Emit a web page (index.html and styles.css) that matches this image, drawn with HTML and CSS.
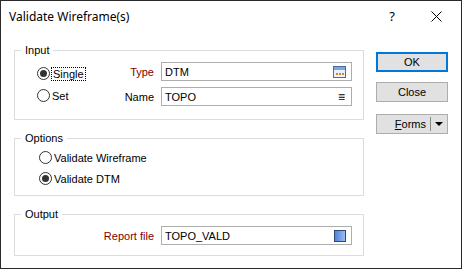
FILE: index.html
```html
<!DOCTYPE html>
<html lang="en">
<head>
  <meta charset="UTF-8">
  <title>Validate Wireframe(s)</title>
  <link rel="stylesheet" href="styles.css">
</head>
<body>

  <div class="window">
    <div class="titlebar">
      <span class="title">Validate Wireframe(s)</span>
      <span class="help">?</span>
      <svg class="close-x" width="11" height="11" viewBox="0 0 11 11">
        <path d="M0.5 0.5 L10.5 10.5 M10.5 0.5 L0.5 10.5" stroke="#000" stroke-width="1"/>
      </svg>
    </div>

    <div class="content">
      <div class="groups">

        <fieldset class="group group-input">
          <legend>Input</legend>
          <div class="radios">
            <label class="radio"><span class="dot checked"></span><span class="focus">Single</span></label>
            <label class="radio"><span class="dot"></span><span>Set</span></label>
          </div>
          <div class="fields">
            <div class="row">
              <span class="lbl red">Type</span>
              <div class="box">
                <span>DTM</span>
                <svg class="ico" width="13" height="12" viewBox="0 0 13 12">
                  <rect x="0.5" y="0.5" width="12" height="11" fill="#eaf1fb" stroke="#4a6d9c"/>
                  <rect x="1" y="1" width="11" height="3" fill="#7fa6dc"/>
                  <rect x="3" y="7" width="2" height="2" fill="#c98a2b"/>
                  <rect x="6" y="7" width="2" height="2" fill="#c98a2b"/>
                  <rect x="9" y="7" width="2" height="2" fill="#c98a2b"/>
                </svg>
              </div>
            </div>
            <div class="row">
              <span class="lbl">Name</span>
              <div class="box">
                <span>TOPO</span>
                <span class="list">&#8801;</span>
              </div>
            </div>
          </div>
        </fieldset>

        <fieldset class="group group-options">
          <legend>Options</legend>
          <div class="radios">
            <label class="radio"><span class="dot"></span><span>Validate Wireframe</span></label>
            <label class="radio"><span class="dot checked"></span><span>Validate DTM</span></label>
          </div>
        </fieldset>

        <fieldset class="group group-output">
          <legend>Output</legend>
          <div class="row">
            <span class="lbl red">Report file</span>
            <div class="box">
              <span>TOPO_VALD</span>
              <svg class="ico" width="12" height="12" viewBox="0 0 12 12">
                <defs>
                  <linearGradient id="blu" x1="0" y1="0" x2="1" y2="0">
                    <stop offset="0" stop-color="#4f7fd6"/>
                    <stop offset="1" stop-color="#9cc0f5"/>
                  </linearGradient>
                </defs>
                <rect x="0.5" y="0.5" width="11" height="11" fill="url(#blu)" stroke="#2c4a7c"/>
              </svg>
            </div>
          </div>
        </fieldset>

      </div>

      <div class="buttons">
        <button class="btn default">OK</button>
        <button class="btn">Close</button>
        <button class="btn split">
          <span class="split-main"><u>F</u>orms</span>
          <span class="split-arrow"></span>
        </button>
      </div>
    </div>
  </div>

</body>
</html>
```

FILE: styles.css
```css
* {
  box-sizing: border-box;
}
body {
  margin: 0;
  background: #fff;
  font-family: "Liberation Sans", Arial, sans-serif;
  font-size: 11px;
  color: #000;
}
.window {
  width: 462px;
  height: 269px;
  border: 1px solid #2b2b2b;
  background: #fff;
}
.titlebar {
  height: 30px;
  display: flex;
  align-items: center;
  padding-left: 8px;
}
.title {
  font-family: "Noto Sans", sans-serif;
  font-size: 12px;
  flex: 1;
}
.help {
  font-family: "Noto Sans", sans-serif;
  font-size: 13px;
  margin-right: 36px;
}
.close-x {
  margin-right: 19px;
}

.content {
  display: flex;
  padding: 13px 0 0 13px;
}
.groups {
  width: 350px;
}
.group {
  margin: 0 0 12px 0;
  padding: 0;
  border: 1px solid #dcdcdc;
}
.group legend {
  margin-left: 6px;
  padding: 0 4px;
}
.group-input {
  display: flex;
  height: 76px;
  padding: 6px 11px 0 0;
}
.radios {
  display: flex;
  flex-direction: column;
  gap: 9px;
  padding-top: 5px;
  margin-left: 22px;
}
.radio {
  display: flex;
  align-items: center;
  height: 13px;
}
.dot {
  width: 13px;
  height: 13px;
  border: 1px solid #333;
  border-radius: 50%;
  margin-right: 2px;
  position: relative;
  background: #fff;
}
.dot.checked::after {
  content: "";
  position: absolute;
  left: 2px;
  top: 2px;
  width: 7px;
  height: 7px;
  border-radius: 50%;
  background: #333;
}
.focus {
  outline: 1px dotted #000;
  padding: 0 1px;
}
.fields {
  flex: 1;
  display: flex;
  flex-direction: column;
  gap: 6px;
}
.row {
  display: flex;
  align-items: center;
  justify-content: flex-end;
}
.lbl {
  margin-right: 7px;
}
.red {
  color: #800000;
}
.box {
  width: 191px;
  height: 19px;
  border: 1px solid #adadad;
  display: flex;
  align-items: center;
  justify-content: space-between;
  padding: 0 5px 0 3px;
}
.list {
  font-size: 12px;
  margin-right: 1px;
}

.group-options {
  height: 64px;
  padding: 2px 0 0 0;
}
.group-options .radios {
  margin-left: 24px;
  gap: 8px;
}
.group-output {
  height: 48px;
  padding: 6px 11px 0 0;
}

.buttons {
  display: flex;
  flex-direction: column;
  gap: 10px;
  margin-left: 12px;
  padding-top: 8px;
}
.btn {
  width: 72px;
  height: 20px;
  background: #e1e1e1;
  border: 1px solid #adadad;
  font-family: inherit;
  font-size: 11px;
  padding: 0;
}
.btn.default {
  border: 2px solid #0078d7;
}
.split {
  display: flex;
  align-items: center;
  margin-top: 2px;
}
.split-main {
  flex: 1;
  text-align: right;
  padding-right: 4px;
  border-right: 1px solid #888;
  line-height: 14px;
}
.split-arrow {
  width: 16px;
  display: flex;
  justify-content: center;
}
.split-arrow::after {
  content: "";
  border-left: 4px solid transparent;
  border-right: 4px solid transparent;
  border-top: 4px solid #000;
}
```
